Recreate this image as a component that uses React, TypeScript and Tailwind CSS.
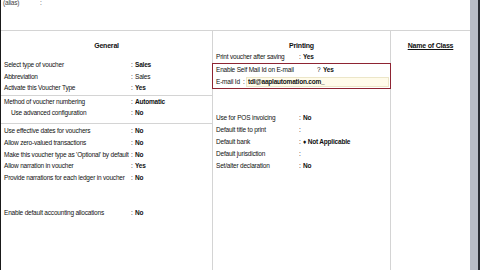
import React from "react";

type Row = { label: string; value?: string; bold?: boolean; indent?: boolean };

const generalTop: Row[] = [
  { label: "Select type of voucher", value: "Sales", bold: true },
  { label: "Abbreviation", value: "Sales" },
  { label: "Activate this Voucher Type", value: "Yes", bold: true },
];

const generalMid: Row[] = [
  { label: "Method of voucher numbering", value: "Automatic", bold: true },
  { label: "Use advanced configuration", value: "No", bold: true, indent: true },
];

const generalBottom: Row[] = [
  { label: "Use effective dates for vouchers", value: "No", bold: true },
  { label: "Allow zero-valued transactions", value: "No", bold: true },
  { label: "Make this voucher type as 'Optional' by default", value: "No", bold: true },
  { label: "Allow narration in voucher", value: "Yes", bold: true },
  { label: "Provide narrations for each ledger in voucher", value: "No", bold: true },
];

const printingRows: Row[] = [
  { label: "Use for POS invoicing", value: "No", bold: true },
  { label: "Default title to print" },
  { label: "Default bank", value: "\u2666 Not Applicable", bold: true },
  { label: "Default jurisdiction" },
  { label: "Set/alter declaration", value: "No", bold: true },
];

function GeneralRow({ row }: { row: Row }) {
  return (
    <div className="flex items-center h-[11.7px] whitespace-nowrap">
      <span className={`w-[130px] shrink-0 ${row.indent ? "pl-[10px]" : "pl-[3px]"}`}>{row.label}</span>
      <span className="w-[4px]">:</span>
      <span className={row.bold ? "font-bold" : ""}>{row.value}</span>
    </div>
  );
}

function PrintRow({ row }: { row: Row }) {
  return (
    <div className="flex items-center h-[12px] whitespace-nowrap">
      <span className="w-[86px] shrink-0 pl-[3px]">{row.label}</span>
      <span className="w-[4px]">:</span>
      <span className={row.bold ? "font-bold" : ""}>{row.value}</span>
    </div>
  );
}

export default function App() {
  return (
    <div
      className="w-[480px] h-[270px] overflow-hidden flex bg-white text-[6.5px] tracking-[-0.2px] text-[#111]"
      style={{ fontFamily: '"Liberation Sans", Arial, sans-serif' }}
    >
      <div className="w-[1px] bg-[#1a1a1a] shrink-0" />
      <div className="flex-1 flex flex-col">
        {/* alias strip */}
        <div className="h-[31px] border-b border-[#d4d4d4]">
          <div className="flex items-center h-[7px] pl-[2px] leading-none whitespace-nowrap text-[#444]">
            <span className="w-[37px]">(alias)</span>
            <span>:</span>
          </div>
        </div>

        <div className="flex-1 flex">
          {/* General */}
          <div className="w-[212px] border-r border-[#d4d4d4] flex flex-col">
            <div className="h-[28px] flex items-center justify-center text-[7px] font-semibold pt-[2px]">
              General
            </div>
            {generalTop.map((r) => (
              <GeneralRow key={r.label} row={r} />
            ))}
            <div className="border-b border-[#d4d4d4] mt-[0.5px]" />
            {generalMid.map((r) => (
              <GeneralRow key={r.label} row={r} />
            ))}
            <div className="border-b border-[#d4d4d4] mt-[4px]" />
            <div className="pt-[1.5px]">
              {generalBottom.map((r) => (
                <GeneralRow key={r.label} row={r} />
              ))}
            </div>
            <div className="mt-[23px]">
              <GeneralRow row={{ label: "Enable default accounting allocations", value: "No", bold: true }} />
            </div>
          </div>

          {/* Printing */}
          <div className="w-[178px] border-r border-[#d4d4d4] flex flex-col whitespace-nowrap">
            <div className="h-[20px] flex items-end justify-center text-[7px] font-semibold">Printing</div>
            <div className="flex items-center h-[12px]">
              <span className="w-[86px] shrink-0 pl-[3px]">Print voucher after saving</span>
              <span className="w-[4px]">:</span>
              <span className="font-bold">Yes</span>
            </div>
            <div className="border-[1.5px] border-[#8e2433] -ml-[1px] mr-[-1px] h-[26px] flex flex-col justify-center">
              <div className="flex items-center h-[11px]">
                <span className="w-[104px] shrink-0 pl-[3px]">Enable Self Mail Id on E-mail</span>
                <span className="w-[6px]">?</span>
                <span className="font-bold">Yes</span>
              </div>
              <div className="flex items-center h-[11px] mt-[0.5px]">
                <span className="w-[30px] shrink-0 pl-[3px]">E-mail Id</span>
                <span className="w-[3px]">:</span>
                <span className="flex-1 h-[10px] bg-[#fffbea] border border-[#ece6c8] flex items-center pl-[1px] font-bold mr-[1px]">
                  tdl@aaplautomation.com_
                </span>
              </div>
            </div>
            <div className="h-[23px]" />
            {printingRows.map((r) => (
              <PrintRow key={r.label} row={r} />
            ))}
          </div>

          {/* Name of Class */}
          <div className="flex-1 flex flex-col">
            <div className="h-[28px] flex items-center justify-center pt-[2px]">
              <span className="text-[7px] font-semibold underline">Name of Class</span>
            </div>
          </div>
        </div>
      </div>
      <div className="w-[8px] bg-[#b9bdc6] shrink-0" />
      <div className="w-[2px] bg-[#2a2d33] shrink-0" />
    </div>
  );
}
